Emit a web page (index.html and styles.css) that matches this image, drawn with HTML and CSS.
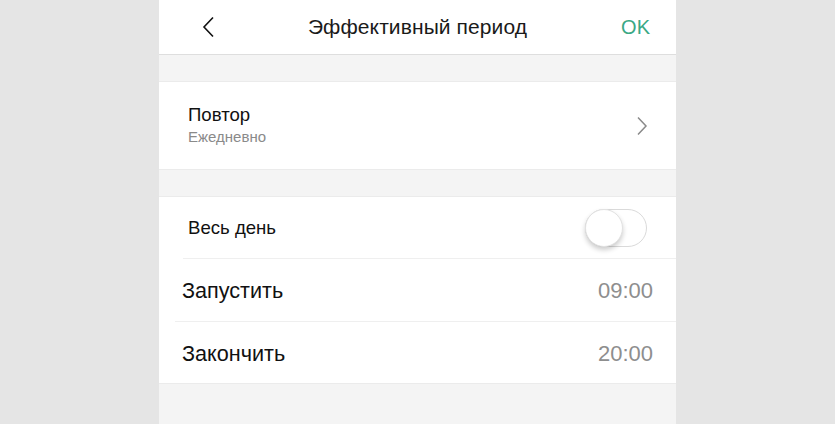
FILE: index.html
```html
<!DOCTYPE html>
<html lang="ru">
<head>
<meta charset="UTF-8" />
<meta name="viewport" content="width=device-width, initial-scale=1" />
<title>Эффективный период</title>
<link rel="stylesheet" href="styles.css">
</head>
<body>

<div class="screen">
  <div class="top-bar">
    <span class="back">
      <svg width="14" height="22" viewBox="0 0 14 22"><path d="M11 1.5 L2 11 L11 20.5" fill="none" stroke="#111" stroke-width="1.6"/></svg>
    </span>
    <div class="top-title">Эффективный период</div>
    <span class="ok-btn">OK</span>
  </div>

  <div class="group">
    <div class="row row-repeat">
      <div>
        <div class="row-label">Повтор</div>
        <div class="row-sub">Ежедневно</div>
      </div>
      <svg width="12" height="20" viewBox="0 0 12 20"><path d="M2 1.5 L10 10 L2 18.5" fill="none" stroke="#8a8a8a" stroke-width="1.5"/></svg>
    </div>
  </div>

  <div class="group">
    <div class="row row-allday">
      <span class="row-label">Весь день</span>
      <span class="switch"><span class="knob"></span></span>
    </div>
    <div class="row row-time">
      <span class="time-label">Запустить</span>
      <span class="time-value">09:00</span>
    </div>
    <div class="row row-time">
      <span class="time-label">Закончить</span>
      <span class="time-value">20:00</span>
    </div>
  </div>
</div>

</body>
</html>
```

FILE: styles.css
```css
body {
  margin: 0;
  background-color: #e5e5e5;
  font-family: 'Liberation Sans', Arial, sans-serif;
  color: #111;
}
.screen {
  width: 517px;
  height: 424px;
  margin: 0 auto;
  background: #f4f4f4;
  overflow: hidden;
}
.top-bar {
  height: 54px;
  background: white;
  border-bottom: 1px solid #dedede;
  display: flex;
  align-items: center;
  justify-content: space-between;
  padding: 0 26px 0 43px;
}
.back {
  display: flex;
  width: 60px;
}
.top-title {
  font-size: 21px;
  letter-spacing: 0.1px;
  color: #1a1a1a;
}
.ok-btn {
  width: 77px;
  text-align: right;
  font-size: 20px;
  color: #3aa885;
}
.group {
  margin-top: 26px;
  background: white;
  border-top: 1px solid #ebebeb;
  border-bottom: 1px solid #ebebeb;
}
.row {
  display: flex;
  align-items: center;
  justify-content: space-between;
}
.row-repeat {
  height: 87px;
  padding: 0 28px 0 29px;
}
.row-repeat > div {
  margin-top: -3px;
}
.row-label {
  font-size: 18.6px;
  color: #111;
}
.row-sub {
  margin-top: 2px;
  font-size: 15px;
  color: #8a8a8a;
}
.row-allday {
  height: 61px;
  margin-left: 24px;
  padding: 0 29px 0 5px;
  border-bottom: 1px solid #efefef;
}
.switch {
  position: relative;
  width: 60px;
  height: 36px;
  border: 1px solid #dadada;
  border-radius: 19px;
  background: white;
}
.knob {
  position: absolute;
  left: -1px;
  top: -1px;
  width: 36px;
  height: 36px;
  border-radius: 50%;
  background: white;
  border: 1px solid #e2e2e2;
  box-shadow: 0 3px 5px rgb(0 0 0 / 0.2);
}
.row-time {
  height: 62px;
  margin-left: 16px;
  padding: 2px 23px 0 7px;
  box-sizing: border-box;
}
.row-time + .row-time {
  border-top: 1px solid #efefef;
}
.time-label {
  font-size: 21.6px;
  color: #111;
}
.time-value {
  font-size: 22px;
  color: #8e8e8e;
}
```
